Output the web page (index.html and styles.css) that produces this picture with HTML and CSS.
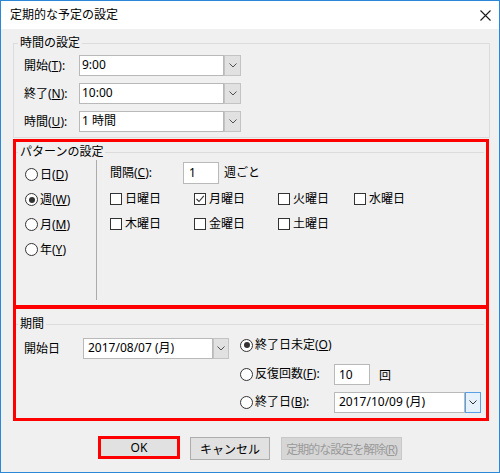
FILE: index.html
```html
<!DOCTYPE html>
<html lang="ja">
<head>
  <meta charset="UTF-8">
  <title>定期的な予定の設定</title>
  <link rel="stylesheet" href="styles.css">
</head>
<body>
  <div class="window">
    <div class="titlebar">
      <span class="title">定期的な予定の設定</span>
      <svg class="close" width="11" height="11" viewBox="0 0 11 11"><path d="M0.5 0.5L10.5 10.5M10.5 0.5L0.5 10.5" stroke="#1a1a1a" stroke-width="1.1" fill="none"/></svg>
    </div>

    <div class="content">
      <!-- 時間 -->
      <fieldset class="group group-time">
        <legend>時間の設定</legend>
        <div class="field-row">
          <label class="field-label">開始(<u>T</u>):</label>
          <div class="combo">
            <span class="combo-text">9:00</span>
            <span class="combo-btn"><svg width="8" height="5" viewBox="0 0 8 5"><path d="M0.5 0.5L4 4L7.5 0.5" stroke="#505050" fill="none"/></svg></span>
          </div>
        </div>
        <div class="field-row">
          <label class="field-label">終了(<u>N</u>):</label>
          <div class="combo">
            <span class="combo-text">10:00</span>
            <span class="combo-btn"><svg width="8" height="5" viewBox="0 0 8 5"><path d="M0.5 0.5L4 4L7.5 0.5" stroke="#505050" fill="none"/></svg></span>
          </div>
        </div>
        <div class="field-row">
          <label class="field-label">時間(<u>U</u>):</label>
          <div class="combo">
            <span class="combo-text">1 時間</span>
            <span class="combo-btn"><svg width="8" height="5" viewBox="0 0 8 5"><path d="M0.5 0.5L4 4L7.5 0.5" stroke="#505050" fill="none"/></svg></span>
          </div>
        </div>
      </fieldset>

      <!-- パターン -->
      <div class="mark mark-pattern">
        <fieldset class="group-line">
          <legend>パターンの設定</legend>
          <div class="pattern">
            <div class="radios">
              <div class="radio"><span class="circle"></span>日(<u>D</u>)</div>
              <div class="radio"><span class="circle on"></span>週(<u>W</u>)</div>
              <div class="radio"><span class="circle"></span>月(<u>M</u>)</div>
              <div class="radio"><span class="circle"></span>年(<u>Y</u>)</div>
            </div>
            <div class="detail">
              <div class="interval">
                <span class="interval-label">間隔(<u>C</u>):</span>
                <span class="textbox num">1</span>
                <span class="unit">週ごと</span>
              </div>
              <div class="days">
                <div class="check"><span class="box"></span>日曜日</div>
                <div class="check"><span class="box"><svg width="10" height="10" viewBox="0 0 10 10"><path d="M1.5 5L4 7.5L8.8 1.8" stroke="#333" stroke-width="1.1" fill="none"/></svg></span>月曜日</div>
                <div class="check"><span class="box"></span>火曜日</div>
                <div class="check"><span class="box"></span>水曜日</div>
                <div class="check"><span class="box"></span>木曜日</div>
                <div class="check"><span class="box"></span>金曜日</div>
                <div class="check"><span class="box"></span>土曜日</div>
              </div>
            </div>
          </div>
        </fieldset>
      </div>

      <!-- 期間 -->
      <div class="mark mark-range">
        <fieldset class="group-line range-group">
          <legend>期間</legend>
          <div class="range">
            <div class="range-start">
              <span class="start-label">開始日</span>
              <div class="combo">
                <span class="combo-text date">2017/08/07 (月)</span>
                <span class="combo-btn"><svg width="8" height="5" viewBox="0 0 8 5"><path d="M0.5 0.5L4 4L7.5 0.5" stroke="#505050" fill="none"/></svg></span>
              </div>
            </div>
            <div class="range-end">
              <div class="end-row first">
                <div class="radio"><span class="circle on"></span>終了日未定(<u>O</u>)</div>
              </div>
              <div class="end-row">
                <div class="radio end-label"><span class="circle"></span>反復回数(<u>F</u>):</div>
                <span class="textbox count">10</span>
                <span class="times">回</span>
              </div>
              <div class="end-row">
                <div class="radio end-label"><span class="circle"></span>終了日(<u>B</u>):</div>
                <div class="combo">
                  <span class="combo-text end-date">2017/10/09 (月)</span>
                  <span class="combo-btn focus"><svg width="8" height="5" viewBox="0 0 8 5"><path d="M0.5 0.5L4 4L7.5 0.5" stroke="#303030" fill="none"/></svg></span>
                </div>
              </div>
            </div>
          </div>
        </fieldset>
      </div>

      <div class="buttons">
        <button class="btn btn-ok">OK</button>
        <button class="btn btn-cancel">キャンセル</button>
        <button class="btn btn-clear" disabled>定期的な設定を解除(<u>R</u>)</button>
      </div>
    </div>
  </div>
</body>
</html>
```

FILE: styles.css
```css
* {
  box-sizing: border-box;
}
body {
  margin: 0;
  font-family: "Noto Sans", "Noto Sans CJK JP", sans-serif;
  font-size: 12px;
  line-height: 16px;
  color: #000;
  background: #fff;
}
u {
  text-underline-offset: 1px;
}
.window {
  width: 500px;
  height: 473px;
  border: 1px solid #2b88d8;
  background-color: #f0f0f0;
  display: flex;
  flex-direction: column;
}
.titlebar {
  height: 28px;
  flex: none;
  background-color: #fff;
  display: flex;
  align-items: center;
  justify-content: space-between;
  padding: 0 8px 0 9px;
}
.close {
  display: block;
}
.content {
  padding: 6px 0 0 12px;
}

/* group boxes */
.group {
  margin: 0;
  padding: 0;
  border: 1px solid #dcdcdc;
  min-width: 0;
}
.group legend,
.group-line legend {
  padding: 0 2px;
  line-height: 16px;
}
.group legend {
  margin-left: 4px;
}
.group-time {
  width: 477px;
  padding: 4px 0 5px 0;
}
.group-line {
  margin: 2px 2px 0 0;
  padding: 0;
  border: 0;
  border-top: 1px solid #dcdcdc;
  min-width: 0;
}
.group-line legend {
  margin-left: 2px;
}
.range-group {
  margin-top: 7px;
}
.field-row {
  display: flex;
  align-items: center;
  height: 21px;
  padding-left: 10px;
}
.field-row + .field-row {
  margin-top: 7px;
}
.field-label {
  width: 55px;
}

/* combo box */
.combo {
  display: flex;
  height: 21px;
}
.combo-text {
  width: 145px;
  height: 21px;
  border: 1px solid #b9b9b9;
  background-color: #fff;
  padding: 1px 0 0 2px;
  white-space: nowrap;
}
.combo-btn {
  width: 17px;
  height: 21px;
  border: 1px solid #c3c3c3;
  background-color: #e1e1e1;
  display: flex;
  align-items: center;
  justify-content: center;
}
.combo-btn.focus {
  width: 16px;
  border-color: #5aa0e6;
  background-color: #e5f1fb;
}
.combo-text.date {
  width: 130px;
  padding-left: 4px;
}
.combo-btn svg {
  display: block;
}
.range-start .combo-btn {
  width: 16px;
}
.combo-text.end-date {
  width: 131px;
  padding-left: 4px;
}

/* red marks */
.mark {
  border: 3px solid #ff0000;
  width: 476px;
}
.mark-pattern {
  margin-top: 1px;
  height: 169px;
}
.mark-range {
  margin-top: -2px;
  height: 115px;
}

/* pattern */
.pattern {
  display: flex;
  height: 140px;
}
.radios {
  width: 80px;
  padding: 2px 0 0 9px;
}
.radio {
  display: flex;
  align-items: center;
  height: 25px;
  white-space: nowrap;
}
.circle {
  width: 13px;
  height: 13px;
  border: 1px solid #333;
  border-radius: 50%;
  background-color: #fff;
  margin-right: 2px;
  display: flex;
  align-items: center;
  justify-content: center;
}
.circle.on::after {
  content: "";
  width: 6px;
  height: 6px;
  border-radius: 50%;
  background-color: #333;
}
.detail {
  flex: 1;
  border-left: 1px solid #ababab;
  padding: 2px 0 0 13px;
}
.interval {
  display: flex;
  align-items: center;
  height: 22px;
}
.interval-label {
  width: 73px;
}
.textbox {
  height: 22px;
  border: 1px solid #b9b9b9;
  background-color: #fff;
  padding: 2px 0 0 5px;
}
.num {
  width: 36px;
}
.unit {
  margin-left: 5px;
}
.days {
  display: grid;
  grid-template-columns: 84px 84px 76px auto;
  grid-auto-rows: 20px;
  row-gap: 5px;
  margin-top: 5px;
}
.check {
  display: flex;
  align-items: center;
}
.box {
  width: 12px;
  height: 12px;
  border: 1px solid #333;
  background-color: #fff;
  margin-right: 3px;
  display: flex;
  align-items: center;
  justify-content: center;
}

/* range */
.range {
  display: flex;
  align-items: flex-start;
}
.range-start {
  display: flex;
  align-items: center;
  padding-left: 8px;
  margin-top: 6px;
}
.start-label {
  width: 59px;
}
.range-end {
  margin-left: 11px;
  margin-top: 3px;
}
.end-row {
  display: flex;
  align-items: center;
  height: 22px;
  margin-top: 6px;
}
.end-row.first {
  height: 20px;
  margin-top: 0;
}
.end-row.first + .end-row {
  margin-top: 8px;
}
.end-label {
  width: 94px;
}
.count {
  width: 36px;
  height: 21px;
  padding-left: 4px;
}
.times {
  margin-left: 9px;
  padding-top: 4px;
}

/* buttons */
.buttons {
  display: flex;
  align-items: flex-start;
  margin-top: 15px;
  padding-left: 85px;
}
.btn {
  font-family: inherit;
  font-size: 12px;
  height: 23px;
  border: 1px solid #adadad;
  background-color: #e1e1e1;
  color: #000;
  padding: 0;
  white-space: nowrap;
}
.btn-ok {
  width: 82px;
  border: 3px solid #ff0000;
}
.btn-cancel {
  width: 80px;
  margin: 1px 0 0 10px;
}
.btn-clear {
  width: 121px;
  margin: 1px 0 0 11px;
  background-color: #d6d6d6;
  border-color: #c8c8c8;
  color: #9a9a9a;
  letter-spacing: -1px;
}
```
